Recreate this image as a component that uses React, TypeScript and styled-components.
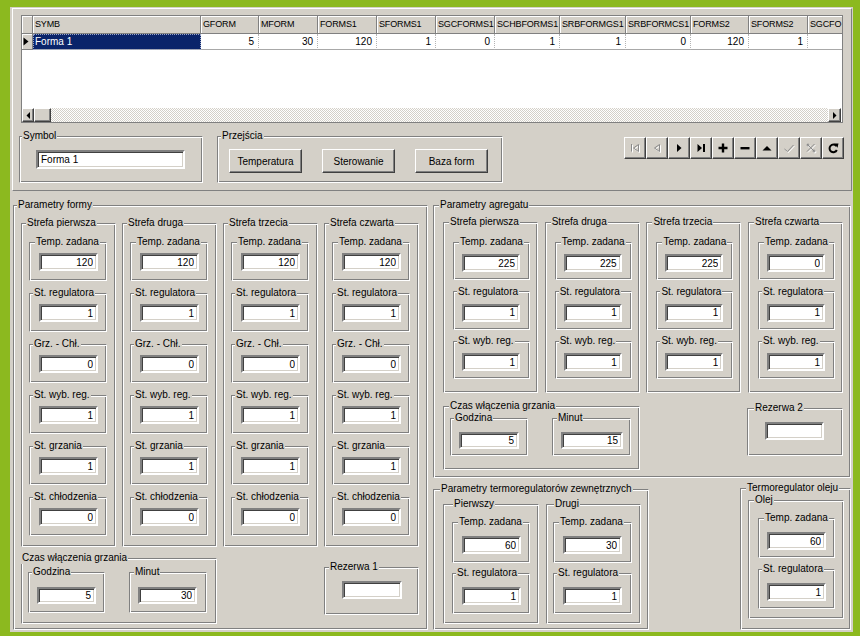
import React from 'react';
import styled, { createGlobalStyle } from 'styled-components';

const GlobalStyle = createGlobalStyle`
  html, body { margin: 0; padding: 0; }
  body {
    background: #8cb91f;
    font-family: "Liberation Sans", Arial, sans-serif;
    font-size: 10px;
    color: #000;
  }
`;

const Screen = styled.div`
  width: 860px;
  height: 636px;
  box-sizing: border-box;
  padding: 7px 0 0 10px;
  background: #8cb91f;
  overflow: hidden;
`;

const Window = styled.div`
  width: 843px;
  height: 625px;
  background: #d4d0c8;
  display: flex;
  flex-direction: column;
`;

const TopPanel = styled.div`
  margin: 1px 1px 0 2px;
  height: 183px;
  box-sizing: border-box;
  border: 1px solid;
  border-color: #fff #808080 #808080 #fff;
  display: flex;
  flex-direction: column;
`;

/* ---------- data grid ---------- */

const DataGrid = styled.div`
  margin: 6px 0 0 8px;
  width: 822px;
  height: 108px;
  box-sizing: border-box;
  border: 1px solid #808080;
  background: #fff;
  display: flex;
  flex-direction: column;
  overflow: hidden;
`;

const GridRow = styled.div<{ $h: number }>`
  display: flex;
  height: ${({ $h }) => $h}px;
  flex-shrink: 0;
`;

const HeadCell = styled.div<{ $w: number }>`
  width: ${({ $w }) => $w}px;
  flex-shrink: 0;
  box-sizing: border-box;
  background: #d4d0c8;
  border-right: 1px solid #808080;
  border-bottom: 1px solid #808080;
  box-shadow: inset 1px 1px 0 #fff;
  padding-left: 2px;
  line-height: 17px;
  font-size: 9px;
  letter-spacing: -0.15px;
  white-space: nowrap;
  overflow: hidden;
`;

const Indicator = styled(HeadCell)`
  display: flex;
  align-items: center;
  padding-left: 1px;
`;

const Cell = styled.div<{ $w: number; $selected?: boolean }>`
  width: ${({ $w }) => $w}px;
  flex-shrink: 0;
  box-sizing: border-box;
  border-right: 1px dotted #b4b4b4;
  border-bottom: 1px solid #a8a8a8;
  line-height: 15px;
  white-space: nowrap;
  overflow: hidden;
  text-align: ${({ $selected }) => ($selected ? 'left' : 'right')};
  padding: ${({ $selected }) => ($selected ? '0 0 0 2px' : '0 4px 0 0')};
  background: ${({ $selected }) => ($selected ? '#0a246a' : '#fff')};
  color: ${({ $selected }) => ($selected ? '#fff' : '#000')};
  outline: ${({ $selected }) => ($selected ? '1px dotted #9aa6c8' : 'none')};
  outline-offset: -1px;
`;

const GridSpace = styled.div`
  flex: 1;
`;

const ScrollBar = styled.div`
  height: 14px;
  flex-shrink: 0;
  display: flex;
  margin-right: 1px;
  background: repeating-conic-gradient(#fff 0 25%, #d4d0c8 0 50%) 0 0 / 2px 2px;
`;

const ScrollPart = styled.div<{ $w: number }>`
  width: ${({ $w }) => $w}px;
  box-sizing: border-box;
  background: #d4d0c8;
  border: 1px solid;
  border-color: #fff #404040 #404040 #fff;
  box-shadow: inset -1px -1px 0 #808080;
  display: flex;
  align-items: center;
  justify-content: center;
`;

const ScrollFill = styled.div`
  flex: 1;
`;

/* ---------- frames, edits, buttons ---------- */

const Frame = styled.fieldset<{ $w: number; $h: number; $mt?: number }>`
  box-sizing: border-box;
  width: ${({ $w }) => $w}px;
  height: ${({ $h }) => $h}px;
  margin: ${({ $mt }) => $mt ?? 0}px 0 0 0;
  padding: 0;
  min-width: 0;
  flex-shrink: 0;
  border: 1px solid #808080;
  border-right-color: #fff;
  border-bottom-color: #fff;
  box-shadow: inset 1px 1px 0 #fff, inset -1px -1px 0 #808080;
`;

const Legend = styled.legend<{ $x: number }>`
  margin-left: ${({ $x }) => $x}px;
  padding: 0 1px;
  line-height: 12px;
  font-size: 10px;
  background: #d4d0c8;
  white-space: nowrap;
`;

const FrameBody = styled.div<{ $pad: string; $dir: string; $gap: number }>`
  display: flex;
  flex-direction: ${({ $dir }) => $dir};
  align-items: flex-start;
  gap: ${({ $gap }) => $gap}px;
  padding: ${({ $pad }) => $pad};
`;

const Edit = styled.input<{ $w: number; $h: number; $left?: boolean }>`
  box-sizing: border-box;
  width: ${({ $w }) => $w}px;
  height: ${({ $h }) => $h}px;
  margin: 0;
  padding: 0 3px;
  background: #fff;
  border: 2px solid;
  border-color: #808080 #fff #fff #808080;
  box-shadow: inset 1px 1px 0 #404040, inset -1px -1px 0 #d4d0c8;
  font: inherit;
  font-size: 10px;
  color: #000;
  text-align: ${({ $left }) => ($left ? 'left' : 'right')};
  outline: none;
`;

const PushButton = styled.button`
  box-sizing: border-box;
  width: 73px;
  height: 24px;
  margin: 0;
  padding: 0;
  background: #d4d0c8;
  border: 1px solid;
  border-color: #fff #404040 #404040 #fff;
  box-shadow: inset -1px -1px 0 #808080;
  font: inherit;
  font-size: 10px;
  color: #000;
`;

const ControlsRow = styled.div`
  display: flex;
  align-items: flex-start;
  gap: 14px;
  margin-top: 7px;
  padding-left: 6px;
`;

const Navigator = styled.div`
  display: flex;
  margin: 7px 7px 0 auto;
`;

const NavButton = styled.button`
  box-sizing: border-box;
  width: 22px;
  height: 22px;
  margin: 0;
  padding: 0;
  background: #d4d0c8;
  border: 1px solid;
  border-color: #fff #404040 #404040 #fff;
  box-shadow: inset -1px -1px 0 #808080;
  display: flex;
  align-items: center;
  justify-content: center;
`;

/* ---------- bottom layout ---------- */

const BottomArea = styled.div`
  display: flex;
  gap: 5px;
  padding: 8px 0 0 3px;
`;

const Column = styled.div`
  display: flex;
  flex-direction: column;
  gap: 5px;
`;

const Row = styled.div<{ $gap: number }>`
  display: flex;
  align-items: flex-start;
  gap: ${({ $gap }) => $gap}px;
`;

type GroupProps = {
  title: string;
  w: number;
  h: number;
  pad?: string;
  dir?: 'row' | 'column';
  gap?: number;
  lx?: number;
  mt?: number;
  children?: React.ReactNode;
};

function Group({ title, w, h, pad = '0', dir = 'row', gap = 0, lx = 4, mt, children }: GroupProps) {
  return (
    <Frame $w={w} $h={h} $mt={mt}>
      <Legend $x={lx}>{title}</Legend>
      <FrameBody $pad={pad} $dir={dir} $gap={gap}>
        {children}
      </FrameBody>
    </Frame>
  );
}

type FieldSpec = { w: number; h: number; pad: string; iw: number; ih: number };

const FORM_FIELD: FieldSpec = { w: 78, h: 45, pad: '5px 0 0 9px', iw: 59, ih: 18 };
const AGG_FIELD: FieldSpec = { w: 77, h: 44, pad: '6px 0 0 8px', iw: 58, ih: 18 };
const EXT_FIELD: FieldSpec = { w: 78, h: 47, pad: '8px 0 0 9px', iw: 59, ih: 18 };
const EXT2_FIELD: FieldSpec = { w: 79, h: 47, pad: '8px 0 0 9px', iw: 59, ih: 18 };
const OIL_FIELD: FieldSpec = { w: 77, h: 46, pad: '8px 0 0 8px', iw: 59, ih: 18 };

function Field({ title, value, spec }: { title: string; value: string; spec: FieldSpec }) {
  const lx = title === 'Temp. zadana' ? 5 : 3;
  return (
    <Group title={title} w={spec.w} h={spec.h} pad={spec.pad} lx={lx}>
      <Edit $w={spec.iw} $h={spec.ih} readOnly value={value} />
    </Group>
  );
}

/* ---------- icons ---------- */

const Off = ({ children }: { children: React.ReactNode }) => (
  <g fill="none" strokeWidth={1}>
    <g stroke="#fff" transform="translate(1 1)">{children}</g>
    <g stroke="#8a8a8a">{children}</g>
  </g>
);

const NAV_ICONS: React.ReactNode[] = [
  <Off key="first">
    <path d="M3.5 3v7.5" />
    <path d="M10.5 3.5L5.5 7l5 3.5z" />
  </Off>,
  <Off key="prior">
    <path d="M9.5 3.5L4.5 7l5 3.5z" />
  </Off>,
  <path key="next" d="M5 3l4.5 4L5 11z" fill="#000" />,
  <g key="last" fill="#000">
    <path d="M3.5 3L8 7l-4.5 4z" />
    <rect x="9" y="3" width="2" height="8" />
  </g>,
  <path key="insert" d="M2.5 7h9M7 2.5v9" stroke="#000" strokeWidth={2.4} />,
  <rect key="delete" x="2.5" y="6" width="9" height="2.4" fill="#000" />,
  <path key="edit" d="M2.5 9.5L7 5l4.5 4.5z" fill="#000" />,
  <Off key="post">
    <path d="M2.5 8l3 2.5 6-6.5" />
  </Off>,
  <Off key="cancel">
    <path d="M3 3l7.5 7.5M10.5 3L3 10.5" />
    <circle cx="4" cy="4" r="1" />
    <circle cx="10" cy="10" r="1" />
  </Off>,
  <g key="refresh">
    <path d="M10.3 5A3.8 3.8 0 1 0 10.8 9" fill="none" stroke="#000" strokeWidth={2} />
    <path d="M8 2.5h4.5l-1 4.3z" fill="#000" />
  </g>,
];

const Arrow = ({ dir }: { dir: 'left' | 'right' }) => (
  <svg width="4" height="7" viewBox="0 0 4 7">
    <path d={dir === 'left' ? 'M4 0v7L0.5 3.5z' : 'M0 0v7l3.5-3.5z'} fill="#000" />
  </svg>
);

/* ---------- data ---------- */

const COLUMNS: { name: string; w: number; value: string }[] = [
  { name: 'SYMB', w: 168, value: 'Forma 1' },
  { name: 'GFORM', w: 58, value: '5' },
  { name: 'MFORM', w: 59, value: '30' },
  { name: 'FORMS1', w: 59, value: '120' },
  { name: 'SFORMS1', w: 59, value: '1' },
  { name: 'SGCFORMS1', w: 59, value: '0' },
  { name: 'SCHBFORMS1', w: 65, value: '1' },
  { name: 'SRBFORMGS1', w: 66, value: '1' },
  { name: 'SRBFORMCS1', w: 65, value: '0' },
  { name: 'FORMS2', w: 58, value: '120' },
  { name: 'SFORMS2', w: 59, value: '1' },
  { name: 'SGCFO', w: 59, value: '' },
];

const ZONES = ['Strefa pierwsza', 'Strefa druga', 'Strefa trzecia', 'Strefa czwarta'];

const FORM_ROWS: { title: string; values: string[] }[] = [
  { title: 'Temp. zadana', values: ['120', '120', '120', '120'] },
  { title: 'St. regulatora', values: ['1', '1', '1', '1'] },
  { title: 'Grz. - Chł.', values: ['0', '0', '0', '0'] },
  { title: 'St. wyb. reg.', values: ['1', '1', '1', '1'] },
  { title: 'St. grzania', values: ['1', '1', '1', '1'] },
  { title: 'St. chłodzenia', values: ['0', '0', '0', '0'] },
];

const AGG_ROWS: { title: string; values: string[] }[] = [
  { title: 'Temp. zadana', values: ['225', '225', '225', '0'] },
  { title: 'St. regulatora', values: ['1', '1', '1', '1'] },
  { title: 'St. wyb. reg.', values: ['1', '1', '1', '1'] },
];

export default function App() {
  return (
    <Screen>
      <GlobalStyle />
      <Window>
        <TopPanel>
          <DataGrid>
            <GridRow $h={18}>
              <Indicator $w={11} />
              {COLUMNS.map((c) => (
                <HeadCell key={c.name} $w={c.w}>
                  {c.name}
                </HeadCell>
              ))}
            </GridRow>
            <GridRow $h={16}>
              <Indicator $w={11}>
                <svg width="6" height="9" viewBox="0 0 6 9">
                  <path d="M0.5 0.5v8l5-4z" fill="#000" />
                </svg>
              </Indicator>
              {COLUMNS.map((c, i) => (
                <Cell key={c.name} $w={c.w} $selected={i === 0}>
                  {c.value}
                </Cell>
              ))}
            </GridRow>
            <GridSpace />
            <ScrollBar>
              <ScrollPart $w={12}>
                <Arrow dir="left" />
              </ScrollPart>
              <ScrollPart $w={17} />
              <ScrollFill />
              <ScrollPart $w={13}>
                <Arrow dir="right" />
              </ScrollPart>
            </ScrollBar>
          </DataGrid>

          <ControlsRow>
            <Group title="Symbol" w={184} h={53} pad="8px 0 0 16px" lx={2}>
              <Edit $w={149} $h={19} $left readOnly value="Forma 1" />
            </Group>
            <Group title="Przejścia" w={286} h={53} pad="7px 0 0 11px" gap={20} lx={3}>
              <PushButton>Temperatura</PushButton>
              <PushButton>Sterowanie</PushButton>
              <PushButton>Baza form</PushButton>
            </Group>
            <Navigator>
              {NAV_ICONS.map((icon, i) => (
                <NavButton key={i}>
                  <svg width="14" height="14" viewBox="0 0 14 14">
                    {icon}
                  </svg>
                </NavButton>
              ))}
            </Navigator>
          </ControlsRow>
        </TopPanel>

        <BottomArea>
          <Group title="Parametry formy" w={415} h={431} pad="6px 0 0 7px" dir="column" gap={5} lx={3}>
            <Row $gap={6}>
              {ZONES.map((zone, z) => (
                <Group key={zone} title={zone} w={95} h={330} pad="7px 0 0 7px" dir="column" gap={6}>
                  {FORM_ROWS.map((r) => (
                    <Field key={r.title} title={r.title} value={r.values[z]} spec={FORM_FIELD} />
                  ))}
                </Group>
              ))}
            </Row>
            <Row $gap={107}>
              <Group title="Czas włączenia grzania" w={196} h={72} pad="2px 0 0 6px" gap={24} lx={-1}>
                <Group title="Godzina" w={77} h={47} pad="9px 0 0 8px" lx={3}>
                  <Edit $w={59} $h={17} readOnly value="5" />
                </Group>
                <Group title="Minut" w={78} h={47} pad="9px 0 0 8px" lx={4}>
                  <Edit $w={59} $h={17} readOnly value="30" />
                </Group>
              </Group>
              <Group title="Rezerwa 1" w={95} h={54} pad="8px 0 0 17px" mt={9}>
                <Edit $w={60} $h={18} readOnly value="" />
              </Group>
            </Row>
          </Group>

          <Column>
            <Group title="Parametry agregatu" w={418} h={279} pad="5px 0 0 9px" dir="column" gap={7} lx={5}>
              <Row $gap={6.7}>
                {ZONES.map((zone, z) => (
                  <Group key={zone} title={zone} w={95} h={177} pad="8px 0 0 9px" dir="column" gap={5.5} lx={5}>
                    {AGG_ROWS.map((r) => (
                      <Field key={r.title} title={r.title} value={r.values[z]} spec={AGG_FIELD} />
                    ))}
                  </Group>
                ))}
              </Row>
              <Row $gap={107}>
                <Group title="Czas włączenia grzania" w={197} h={70} pad="0 0 0 6px" gap={24} lx={5}>
                  <Group title="Godzina" w={78} h={44} pad="8px 0 0 8px" lx={3}>
                    <Edit $w={60} $h={17} readOnly value="5" />
                  </Group>
                  <Group title="Minut" w={79} h={44} pad="8px 0 0 8px" lx={4}>
                    <Edit $w={62} $h={17} readOnly value="15" />
                  </Group>
                </Group>
                <Group title="Rezerwa 2" w={96} h={54} pad="8px 0 0 17px" mt={2} lx={6}>
                  <Edit $w={59} $h={18} readOnly value="" />
                </Group>
              </Row>
            </Group>

            <Row $gap={91}>
              <Group title="Parametry termoregulatorów zewnętrznych" w={216} h={147} pad="3px 0 0 9px" gap={7} lx={6}>
                <Group title="Pierwszy" w={96} h={126} pad="6px 0 0 8px" dir="column" gap={4} lx={9}>
                  <Field title="Temp. zadana" value="60" spec={EXT_FIELD} />
                  <Field title="St. regulatora" value="1" spec={EXT_FIELD} />
                </Group>
                <Group title="Drugi" w={95} h={126} pad="6px 0 0 6px" dir="column" gap={4} lx={7}>
                  <Field title="Temp. zadana" value="30" spec={EXT2_FIELD} />
                  <Field title="St. regulatora" value="1" spec={EXT2_FIELD} />
                </Group>
              </Group>
              <Group title="Termoregulator oleju" w={111} h={148} pad="0 0 0 7px" mt={-1} lx={5}>
                <Group title="Olej" w={96} h={125} pad="6px 0 0 9px" dir="column" gap={5} lx={5}>
                  <Field title="Temp. zadana" value="60" spec={OIL_FIELD} />
                  <Field title="St. regulatora" value="1" spec={OIL_FIELD} />
                </Group>
              </Group>
            </Row>
          </Column>
        </BottomArea>
      </Window>
    </Screen>
  );
}
